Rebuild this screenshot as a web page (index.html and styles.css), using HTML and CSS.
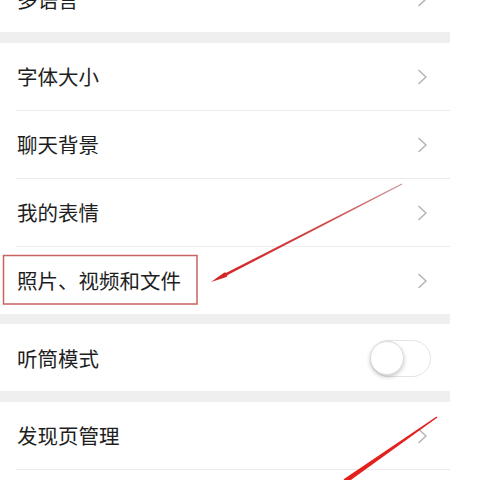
FILE: index.html
```html
<!DOCTYPE html>
<html lang="zh-CN">
<head>
<meta charset="utf-8">
<title>通用设置</title>
<link rel="stylesheet" href="styles.css">
</head>
<body>
<div class="screen">
  <div class="list">
    <div class="group first">
      <div class="row"><span class="label">多语言</span><svg class="chev" viewBox="0 0 14 16"><path d="M2 1.5 L9 8 L2 14.5"/></svg></div>
    </div>
    <div class="gap"></div>
    <div class="group">
      <div class="row"><span class="label">字体大小</span><svg class="chev" viewBox="0 0 14 16"><path d="M2 1.5 L9 8 L2 14.5"/></svg></div>
      <div class="row"><span class="label">聊天背景</span><svg class="chev" viewBox="0 0 14 16"><path d="M2 1.5 L9 8 L2 14.5"/></svg></div>
      <div class="row"><span class="label">我的表情</span><svg class="chev" viewBox="0 0 14 16"><path d="M2 1.5 L9 8 L2 14.5"/></svg></div>
      <div class="row"><span class="label">照片、视频和文件</span><svg class="chev" viewBox="0 0 14 16"><path d="M2 1.5 L9 8 L2 14.5"/></svg></div>
    </div>
    <div class="gap"></div>
    <div class="group">
      <div class="row"><span class="label">听筒模式</span><span class="toggle"><span class="knob"></span></span></div>
    </div>
    <div class="gap"></div>
    <div class="group">
      <div class="row"><span class="label">发现页管理</span><svg class="chev" viewBox="0 0 14 16"><path d="M2 1.5 L9 8 L2 14.5"/></svg></div>
      <div class="row"><span class="label">辅助功能</span><svg class="chev" viewBox="0 0 14 16"><path d="M2 1.5 L9 8 L2 14.5"/></svg></div>
    </div>
  </div>

  <svg class="marks" viewBox="0 0 480 480" width="480" height="480">
    <defs>
      <linearGradient id="g1" gradientUnits="userSpaceOnUse" x1="212" y1="281" x2="402" y2="184">
        <stop offset="0" stop-color="#d42222"/>
        <stop offset="0.6" stop-color="#d04848"/>
        <stop offset="1" stop-color="#c99a9a"/>
      </linearGradient>
    </defs>
    <rect x="3.5" y="255.5" width="193.5" height="48.5" fill="none" stroke="#c96262" stroke-width="1.5"/>
    <polygon fill="url(#g1)" points="211,282 226.5,276.9 227.6,274.9 402.3,184.5 401.7,183.5 226.4,272.7 224.3,272.5"/>
    <polygon fill="#e3201b" points="437.4,417.6 436.6,416.4 343.6,479.2 346.4,483.2"/>
  </svg>
</div>
</body>
</html>
```

FILE: styles.css
```css
html, body {
  margin: 0;
  padding: 0;
  background: #ffffff;
}

.screen {
  position: relative;
  width: 480px;
  height: 480px;
  overflow: hidden;
  background: #ffffff;
  font-family: "Noto Sans CJK SC", "Noto Sans", sans-serif;
}

.list {
  width: 450px;
  display: flex;
  flex-direction: column;
  margin-top: -35px;
}

.group {
  background: #ffffff;
  display: flex;
  flex-direction: column;
}

.gap {
  height: 10.5px;
  background: #efefef;
}

.row {
  height: 68px;
  margin-left: 16px;
  padding-left: 1px;
  padding-right: 19px;
  padding-top: 1px;
  display: flex;
  align-items: center;
  justify-content: space-between;
  box-sizing: border-box;
  border-bottom: 1px solid #ebebeb;
  flex: none;
}

.group .row:last-child {
  border-bottom: none;
  height: 67px;
}

.label {
  font-size: 20.5px;
  color: #1e1e1e;
  line-height: 1;
}

.chev {
  width: 14px;
  height: 16px;
  flex: none;
}

.chev path {
  fill: none;
  stroke: #b6b6b6;
  stroke-width: 1.6;
  stroke-linecap: round;
  stroke-linejoin: round;
}

.toggle {
  width: 61px;
  height: 37px;
  box-sizing: border-box;
  border: 1.5px solid #e4e4e4;
  border-radius: 19px;
  background: #ffffff;
  display: flex;
  align-items: center;
  flex: none;
}

.knob {
  width: 34px;
  height: 34px;
  box-sizing: border-box;
  border-radius: 50%;
  background: #ffffff;
  border: 1px solid #dcdcdc;
  box-shadow: 0 2px 4px rgba(0, 0, 0, 0.22);
  margin-left: -1px;
}

.marks {
  position: absolute;
  left: 0;
  top: 0;
  pointer-events: none;
}
```
